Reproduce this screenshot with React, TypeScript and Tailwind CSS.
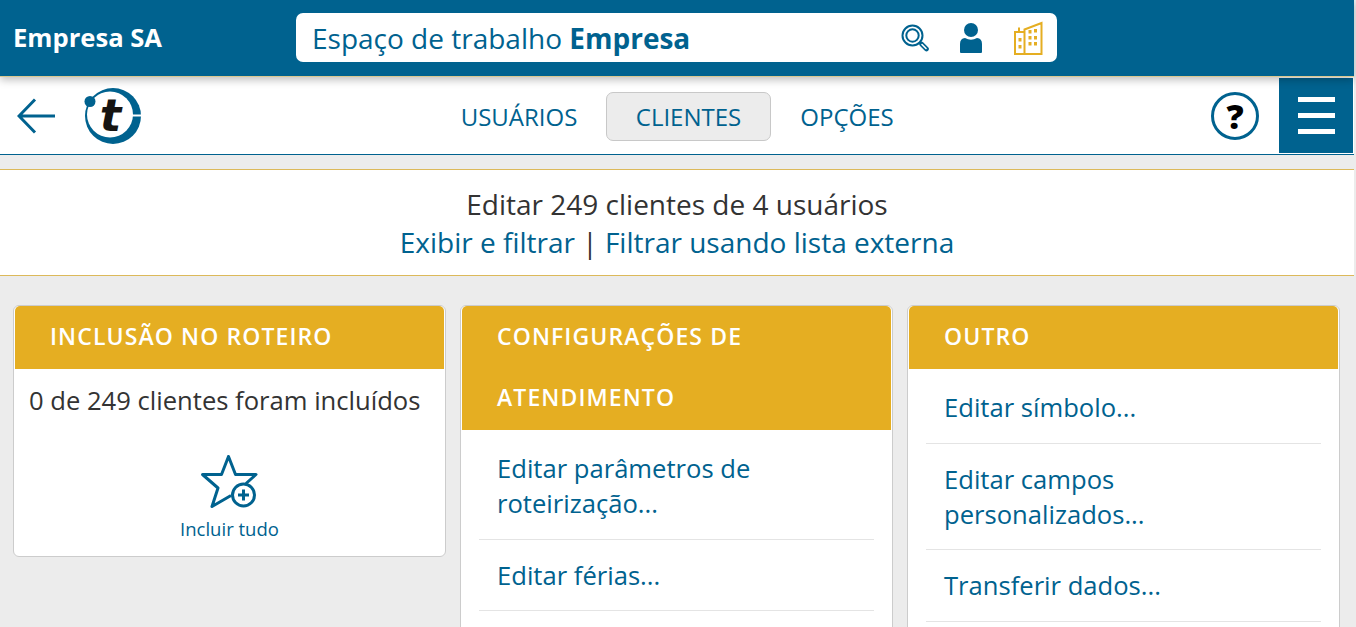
const font = { fontFamily: '"Open Sans", sans-serif' };

function Search() {
  return (
    <svg width="28" height="28" viewBox="0 0 28 28" fill="none" stroke="#00628f">
      <circle cx="11.500" cy="11.500" r="10" strokeWidth="2" />
      <circle cx="11.500" cy="11.500" r="6.200" strokeWidth="2" />
      <path d="M20.500 20 L25.500 25" strokeWidth="4.600" strokeLinecap="round" />
      <path d="M21 20.500 L25 24.500" stroke="#fff" strokeWidth="1.600" strokeLinecap="round" />
    </svg>
  );
}
function User() {
  return (
    <svg width="24" height="32" viewBox="0 0 24 32" fill="#00628f">
      <circle cx="12" cy="8" r="7" />
      <path d="M1 30 V22 Q1 16.500 6 16 Q12 19.500 18 16 Q23 16.500 23 22 V30 Q23 31 22 31 H2 Q1 31 1 30Z" />
    </svg>
  );
}
function Building() {
  return (
    <svg width="30" height="34" viewBox="0 0 30 34" fill="none" stroke="#e5ae22" strokeWidth="2">
      <path d="M11.500 33 V8.500 L28.500 2 V33 Z" />
      <path d="M11.500 11 H2 V33 H11.500" />
      <path d="M6 11 V6.500" />
      <g fill="#e5ae22" stroke="none">
        <rect x="15.500" y="9" width="3" height="3.500" /><rect x="21" y="8" width="3" height="3.500" />
        <rect x="15.500" y="15" width="3" height="3.500" /><rect x="21" y="15" width="3" height="3.500" />
        <rect x="15.500" y="21" width="3" height="3.500" /><rect x="21" y="21" width="3" height="3.500" />
        <rect x="5.500" y="17" width="3" height="3.500" /><rect x="5.500" y="24" width="3" height="3.500" />
      </g>
    </svg>
  );
}
function Logo() {
  return (
    <svg width="60" height="60" viewBox="0 0 60 60">
      <circle cx="30" cy="30" r="28" fill="#00628f" />
      <circle cx="27" cy="28.500" r="23" fill="#fff" />
      <rect x="48" y="28.500" width="12" height="2" fill="#fff" />
      <circle cx="7" cy="15.500" r="5.500" fill="#00628f" />
      <text x="27.500" y="45" textAnchor="middle" fontFamily='"DejaVu Sans", sans-serif' fontStyle="italic" fontWeight="700" fontSize="45" fill="#161412">t</text>
    </svg>
  );
}
function StarPlus() {
  return (
    <svg className="mr-[2px]" width="58" height="56" viewBox="0 0 58 56" fill="none" stroke="#00628f">
      <path d="M46 29.500 L56 20.500 H35.500 L28.500 2.500 L21.500 20.500 H2.500 L18 34 L12 52.500 L31 41.500" strokeWidth="3" strokeLinejoin="round" />
      <circle cx="43.500" cy="41" r="11" strokeWidth="3" fill="#fff" />
      <path d="M43.500 35.500 V46.500 M38 41 H49" strokeWidth="3" />
    </svg>
  );
}

function Card({ title, children }: { title: React.ReactNode; children: React.ReactNode }) {
  return (
    <div className="flex-1 min-w-0 bg-white border border-[#cccccc] rounded-[6px] px-[1px] overflow-hidden">
      <div className="bg-[#e5ae22] px-[35px] pb-[2px] text-white font-semibold text-[23px] leading-[61px] tracking-[1.1px] rounded-t-[5px]">
        {title}
      </div>
      {children}
    </div>
  );
}
function Item({ children }: { children: React.ReactNode }) {
  return (
    <div className="mx-[17px] px-[18px] pt-[19px] pb-[17.400px] text-[25.6px] leading-[34.560px] text-[#00628f] border-b border-[#e4e4e4]">
      {children}
    </div>
  );
}

export default function App() {
  return (
    <div className="h-[627px] w-[1356px] overflow-hidden bg-[#ececec]" style={font}>
      <header className="w-[1354px] h-[77px] pb-[1px] bg-[#00628f] border-b border-[#d9c890] flex items-center relative z-10 shadow-[0_3px_8px_rgba(0,0,0,0.25)]">
        <div className="w-[296px] pl-[13px] text-white font-bold text-[25.6px] leading-none">Empresa SA</div>
        <div className="w-[761px] h-[49px] bg-white rounded-[7px] flex items-center pl-[16px] pr-[14px]">
          <div className="flex-1 text-[28px] text-[#00628f] leading-none">
            Espaço de trabalho <b className="font-bold">Empresa</b>
          </div>
          <div className="flex items-center gap-[30px]">
            <Search />
            <User />
            <Building />
          </div>
        </div>
      </header>

      <nav className="w-[1354px] h-[78px] bg-white border-b border-[#00628f] flex items-center">
        <svg className="ml-[17px]" width="39" height="36" viewBox="0 0 39 36" fill="none" stroke="#00628f" strokeWidth="3">
          <path d="M18 1.500 L2 18 L18 34.500 M2 18 H38" />
        </svg>
        <div className="ml-[27px] mt-[1px]"><Logo /></div>
        <div className="ml-[289px] mt-[2px] flex items-center text-[24px] leading-none text-[#00628f] font-medium">
          <div className="w-[174px] text-center">USUÁRIOS</div>
          <div className="w-[165px] h-[49px] flex items-center justify-center bg-[#ececec] border border-[#c8c8c8] rounded-[7px]">CLIENTES</div>
          <div className="w-[152px] text-center">OPÇÕES</div>
        </div>
        <div className="ml-auto mr-[20px] w-[48px] h-[48px] rounded-full border-[3px] border-[#00628f] flex items-center justify-center text-[34px] font-extrabold text-black leading-none">?</div>
        <div className="w-[74px] h-[75px] mr-[1px] bg-[#00628f] flex flex-col items-center justify-center gap-[11px]">
          <div className="w-[37px] h-[5px] bg-white" />
          <div className="w-[37px] h-[5px] bg-white" />
          <div className="w-[37px] h-[5px] bg-white" />
        </div>
      </nav>

      <div className="w-[1354px] mt-[14px] h-[107px] bg-white border-t border-b border-[#dcb95a] flex flex-col items-center justify-center text-[28px] leading-[38px] text-[#333]">
        <div className="text-center">Editar 249 clientes de 4 usuários</div>
        <div className="text-center text-[#00628f]">Exibir e filtrar <span className="text-[#333]">|</span> Filtrar usando lista externa</div>
      </div>

      <div className="flex items-start gap-[14px] pl-[13px] pr-[16px] pt-[29px]">
        <Card title="INCLUSÃO NO ROTEIRO">
          <div className="text-[25.6px] leading-[35px] text-[#333] px-[14px] pt-[14px]">0 de 249 clientes foram incluídos</div>
          <div className="flex flex-col items-center pt-[36px] pb-[15px]">
            <StarPlus />
            <div className="text-[18.500px] leading-[25px] text-[#00628f] mt-[6px]">Incluir tudo</div>
          </div>
        </Card>
        <Card title={<>CONFIGURAÇÕES DE<br />ATENDIMENTO</>}>
          <div className="pt-[3px] pb-[40px]">
            <Item>Editar parâmetros de roteirização...</Item>
            <Item>Editar férias...</Item>
          </div>
        </Card>
        <Card title="OUTRO">
          <div className="pt-[3px] pb-[40px]">
            <Item>Editar símbolo...</Item>
            <Item>Editar campos personalizados...</Item>
            <Item>Transferir dados...</Item>
          </div>
        </Card>
      </div>
    </div>
  );
}
